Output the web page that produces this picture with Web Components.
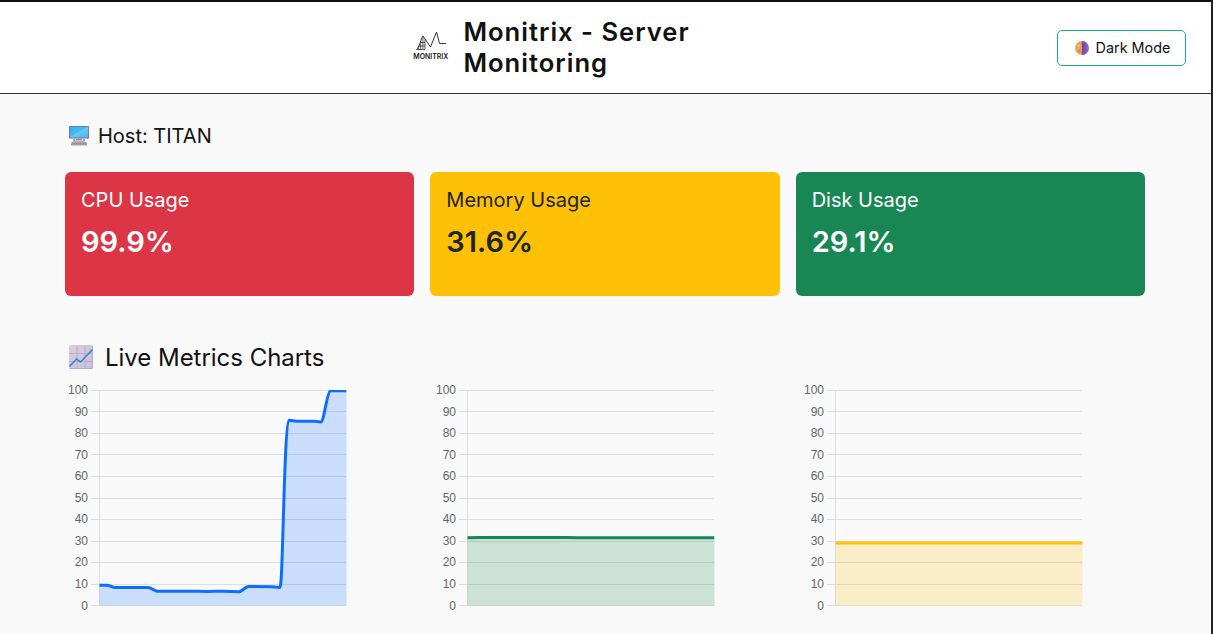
<!DOCTYPE html>
<html lang="en"><head><meta charset="utf-8"><title>Monitrix</title>
<style>html,body{margin:0;height:100%;overflow:hidden;background:#f9f9f9}</style></head>
<body><monitrix-app></monitrix-app>
<script>
const define=(name,html,setup)=>customElements.define(name,class extends HTMLElement{
 connectedCallback(){if(this.shadowRoot)return;const t=document.createElement('template');t.innerHTML=html;
  this.attachShadow({mode:'open'}).append(t.content.cloneNode(true));if(setup)setup(this,this.shadowRoot);}
});
define('monitrix-logo',`<style>:host{display:block;width:38px;height:34px}svg{display:block}</style>
<svg width="38" height="34" viewBox="0 0 38 34"><path d="M3.500 19.500 C7 17 7.500 9 10 6L17.500 17 23.500 2 26.500 13.500H33" fill="none" stroke="#333" stroke-width="1"/>
<path d="M5.500 19.500V16M7.700 19.500V11M9.900 19.500V7M12 19.500V9.500M3.500 19.500H12M5.500 16H12M7 12.500H12" fill="none" stroke="#333" stroke-width=".8"/>
<text x=".3" y="28.600" font-family="Inter,sans-serif" font-size="7.600" font-weight="600" fill="#222" textLength="35" lengthAdjust="spacingAndGlyphs">MONITRIX</text></svg>`);
define('moon-icon',`<style>:host{display:block;width:14px;height:14px}svg{display:block}</style>
<svg width="14" height="14" viewBox="0 0 14 14"><defs><linearGradient id="l"><stop stop-color="#f0a84c"/><stop offset="1" stop-color="#dfa05c"/></linearGradient><linearGradient id="r"><stop stop-color="#6f3fae"/><stop offset="1" stop-color="#9a6fc9"/></linearGradient></defs>
<path d="M7 0a7 7 0 0 0 0 14z" fill="url(#l)"/><path d="M7 0a7 7 0 0 1 0 14z" fill="url(#r)"/><circle cx="4" cy="4.500" r="1.300" fill="#f8c565"/><circle cx="4.500" cy="10" r="1.200" fill="#c98b55"/><circle cx="10.500" cy="5" r="1" fill="#8459b8"/></svg>`);
define('computer-icon',`<style>:host{display:block;width:22px;height:22px}svg{display:block}</style>
<svg width="22" height="22" viewBox="0 0 22 22"><defs><linearGradient id="s" x2="1" y2="1"><stop stop-color="#35a9ed"/><stop offset=".48" stop-color="#4cb9f5"/><stop offset=".5" stop-color="#68c9fb"/><stop offset="1" stop-color="#45b4f4"/></linearGradient></defs>
<rect x="1" y="1" width="20" height="12.500" rx=".5" fill="#7a7086"/><rect x="1.700" y="1.700" width="18.600" height="10.800" fill="url(#s)"/><path d="M8 13.500h6v2H8z" fill="#9c93a5"/><path d="M5 14h2v1.500h8V14h2v2.700H5z" fill="#aaa2b2"/><path d="M3.500 17h15l.7 3.500H2.800z" fill="#a9a2ae"/><path d="M3.300 18.700h15.400" stroke="#8a8292" stroke-width=".6"/></svg>`);
define('graph-icon',`<style>:host{display:block;width:24px;height:24px}svg{display:block}</style>
<svg width="24" height="24" viewBox="0 0 24 24"><defs><linearGradient id="p" x2="1" y2="1"><stop stop-color="#d8cee0"/><stop offset="1" stop-color="#cdbfdc"/></linearGradient></defs><rect width="24" height="24" rx="2" fill="url(#p)"/>
<path d="M0 8.500h24M0 16.500h24M8 0v24M16 0v24" stroke="#b7aabf" stroke-width=".8"/><path d="M.5 23.500h23M23.500 1v22" stroke="#aaa0b5" stroke-width=".7"/><path d="M.5 21.500 7.500 14 11.500 17 23.500 4.500" fill="none" stroke="#2f8fd2" stroke-width="1.600"/></svg>`);
define('app-header',`<style>:host{box-sizing:border-box;height:92px;border-bottom:1px solid #333;background:#fff;display:grid;grid-template-columns:413px 290px 1fr;align-items:center;padding:0 25px 0 0}
.brand{grid-column:2;display:flex;align-items:center;gap:12.400px}
monitrix-logo{flex:none;margin-top:-1px}h1{margin:-2px 0 0;font-size:25.600px;line-height:31px;font-weight:600;letter-spacing:1px;color:#111;white-space:nowrap}
button{justify-self:end;box-sizing:border-box;width:129px;height:36px;margin:1px 0 0;padding:0 0 1px 2px;border:1px solid #11b981;border-radius:5px;background:#fff;display:flex;align-items:center;justify-content:center;gap:7px;font:400 14.400px Inter,sans-serif;color:#111}</style>
<div class="brand"><monitrix-logo></monitrix-logo><h1>Monitrix - Server<br>Monitoring</h1></div><button><moon-icon></moon-icon><span>Dark Mode</span></button>`);
define('section-title',`<style>:host{display:flex;align-items:center;color:#111}</style><slot name="icon"></slot><slot></slot>`);
define('metric-card',`<style>:host{box-sizing:border-box;height:124px;padding:16px;border-radius:6px;display:block}
h5{margin:0 0 8px;font-size:20px;line-height:24px;font-weight:400}p{margin:0;font-size:29px;line-height:43px;font-weight:600}</style><h5><slot></slot></h5><p><slot name="value"></slot></p>`);
// Plots percentages on a 0-100 scale; data-line holds the curve in plot coordinates.
define('metric-chart',`<style>:host{display:block}svg{display:block}</style><svg width="300" height="234"></svg>`,(el,root)=>{
 const c=el.getAttribute('color'),d=el.dataset.line;let s='';
 const grid=[0,21,43,64,86,108,129,151,172,194,215],labels=[0,22,43,65,86,108,129,151,172,194,216];
 for(let i=0;i<=10;i++){const y=10.5+grid[i];
  s+='<path d="M26 '+y+'H281" stroke="#dedede"/><text x="23" y="'+(14+labels[i])+'" text-anchor="end" font-family="Liberation Sans,sans-serif" font-size="12" fill="#666">'+(100-i*10)+'</text>';}
 s+='<path d="M34.500 10V226" stroke="#dedede"/><path d="'+d+'V225.500H34.500Z" fill="'+c+'" fill-opacity=".2"/><svg x="34" y="10" width="247.500" height="217" viewBox="34 10 247.500 217"><path d="'+d+'" fill="none" stroke="'+c+'" stroke-width="3" stroke-linejoin="round"/></svg>';
 root.querySelector('svg').innerHTML=s;
});
define('monitrix-app',`<style>:host{box-sizing:border-box;display:block;width:100%;height:100vh;overflow:hidden;border-top:2px solid #111;border-right:2px solid #222;background:#f9f9f9;font-family:Inter,sans-serif;color:#111}
main{padding:30px 66px 0 65px}.host{height:24px;font-size:20px;line-height:24px}.host computer-icon{margin:0 8px 0 3px}
.cards{display:grid;grid-template-columns:repeat(3,1fr);gap:16px;margin-top:24px}
.red{background:#dc3545;color:#fff}.yellow{background:#ffc107;color:#212529}.green{background:#198754;color:#fff}
.live{height:30px;margin-top:47px;font-size:24px;line-height:30px;letter-spacing:-.03px}.live graph-icon{margin:-2px 12px 0 4px}
.charts{display:grid;grid-template-columns:repeat(3,368px);margin-top:7px}</style>
<app-header></app-header><main><section-title class="host"><computer-icon slot="icon"></computer-icon>Host: TITAN</section-title>
<div class="cards"><metric-card class="red">CPU Usage<span slot="value">99.9%</span></metric-card><metric-card class="yellow">Memory Usage<span slot="value">31.6%</span></metric-card><metric-card class="green">Disk Usage<span slot="value">29.1%</span></metric-card></div>
<section-title class="live"><graph-icon slot="icon"></graph-icon>Live Metrics Charts</section-title>
<div class="charts"><metric-chart color="#0d6efd" data-line="M34.500 205.200H42C45 205.200 47 207.500 50.500 207.600H83C87 207.600 89 211.200 92.500 211.200H133L143 211.500 150 211.200H158L174 211.700C177 211.700 180 206.700 183.500 206.500L207 206.800 215 207.400C218 207.400 219 42 224 40.300L232 41.200H249L256 41.900C259 41.700 262 11.500 265.500 10.500L281.500 10.800"></metric-chart>
<metric-chart color="#198754" data-line="M34.500 157.800 46 157.500H133L145 157.800H281.500"></metric-chart><metric-chart color="#ffc107" data-line="M34.500 163H281.500"></metric-chart></div></main>`);
</script></body></html>
